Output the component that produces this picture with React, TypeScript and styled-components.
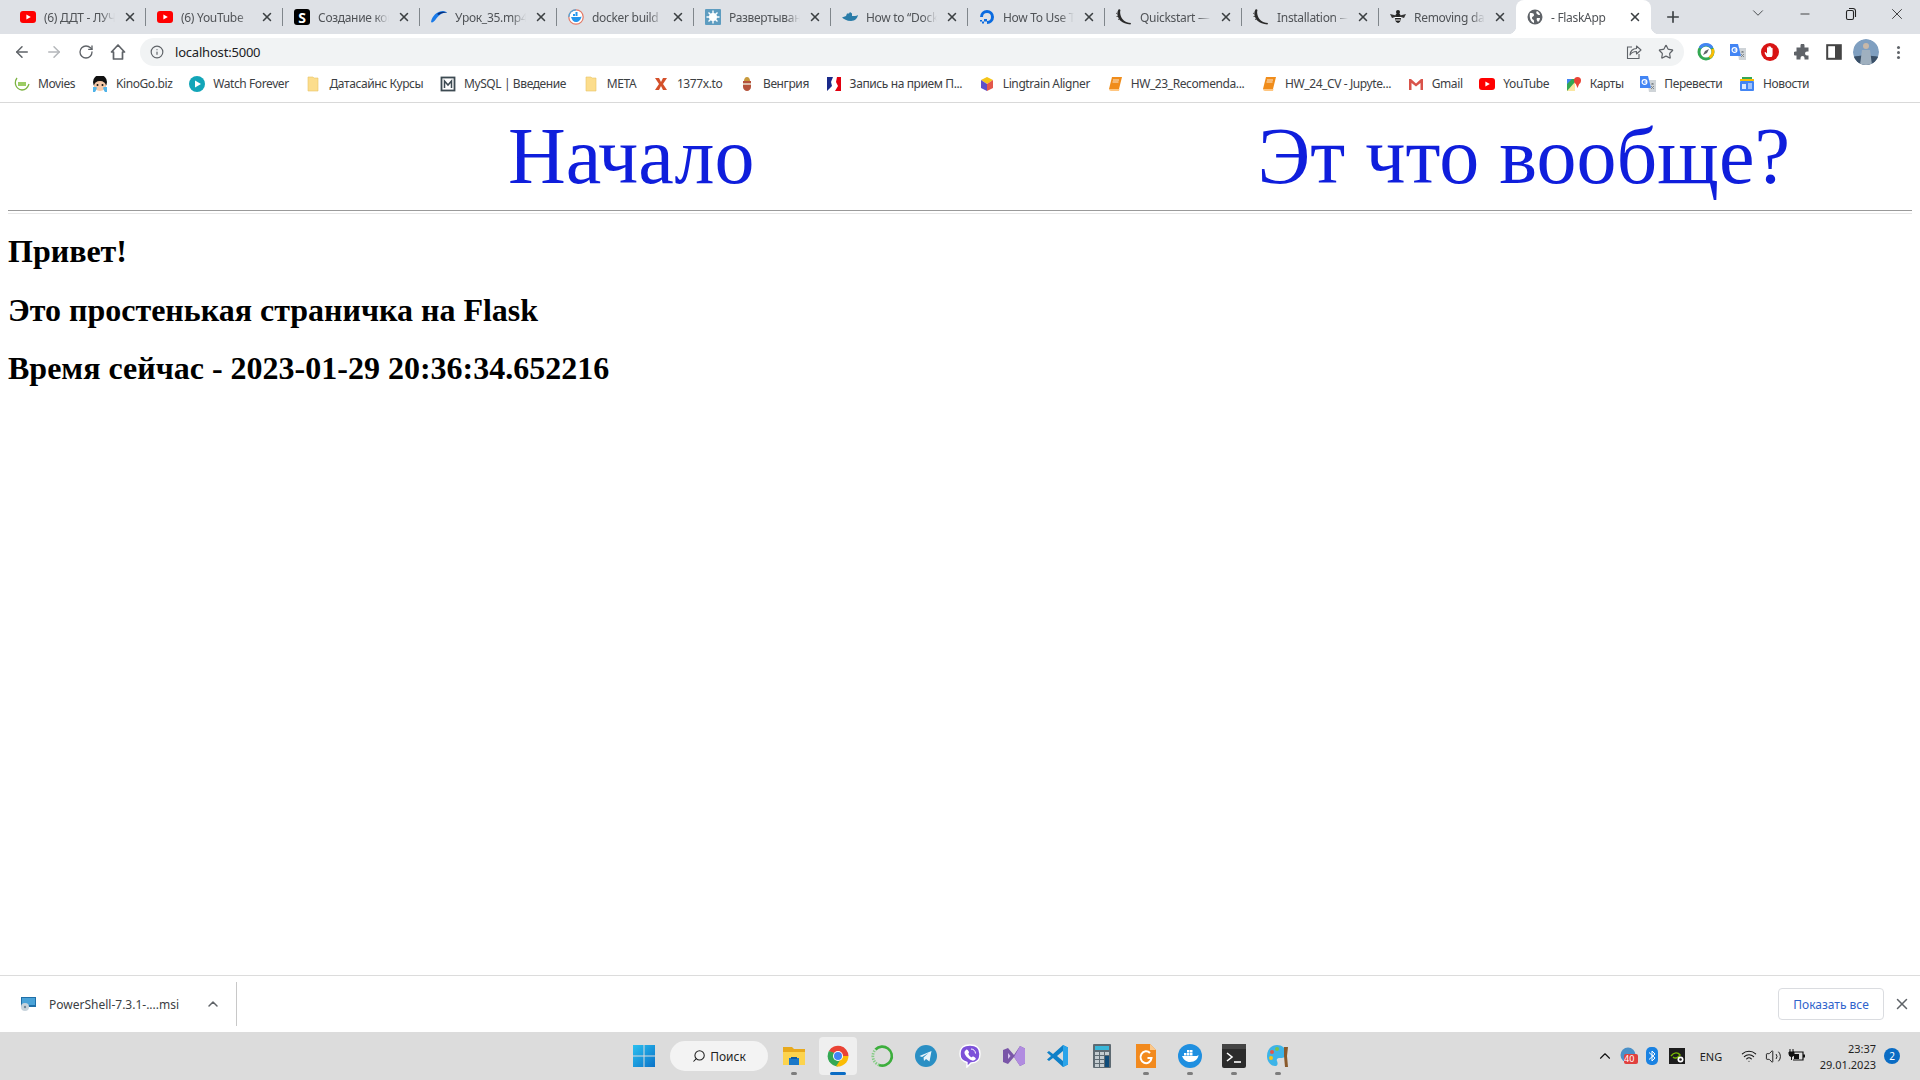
import React from "react";
import styled, { createGlobalStyle } from "styled-components";
import {
  ArrowLeft,
  ArrowRight,
  ChevronDown,
  ChevronUp,
  Info,
  Minus,
  Plus,
  RotateCw,
  Search,
  Star,
  Volume2,
  Wifi,
  X,
} from "lucide-react";

const UI_FONT = `"Noto Sans", "Open Sans", sans-serif`;

const GlobalStyle = createGlobalStyle`
  html, body {
    margin: 0;
    padding: 0;
    background: #fff;
    overflow: hidden;
  }
`;

const Favicon = ({ kind }: { kind: string }) => {
  switch (kind) {
    case "youtube":
      return (
        <svg width="16" height="16" viewBox="0 0 16 16">
          <rect y="2" width="16" height="12" rx="3" fill="#f00" />
          <path d="M6.4 5.4 10.8 8l-4.4 2.6z" fill="#fff" />
        </svg>
      );
    case "skill":
      return <SquareLetter>S</SquareLetter>;
    case "swoosh":
      return (
        <svg width="16" height="16" viewBox="0 0 16 16">
          <path d="M0 13C1 7 6 2 12 2c2 0 4 1 4 2-4-1-8 2-11 6-2 3-4 4-5 3z" fill="#1a7ae8" />
          <path d="M6 5c3-2.500 7-3 10-1-3-.5-6 0-8 2z" fill="#0b2f78" />
        </svg>
      );
    case "dockerRing":
      return (
        <svg width="16" height="16" viewBox="0 0 16 16">
          <circle cx="8" cy="8" r="7.200" fill="#fff" stroke="#e27a68" strokeWidth="1.200" />
          <path d="M.8 8A7.200 7.200 0 0 1 8 .8" fill="none" stroke="#4aa8e0" strokeWidth="1.200" />
          <path d="M3 8h9c.5 0 1-.3 1.500-.5C13 11 10.500 13 8 13s-4-2-5-5z" fill="#2496ed" />
          <path d="M5 5h2v2H5zM7.500 5h2v2h-2zM7.500 3h2v2h-2z" fill="#2496ed" />
        </svg>
      );
    case "splat":
      return (
        <svg width="16" height="16" viewBox="0 0 16 16">
          <rect width="16" height="16" rx="1" fill="#5d9cc0" />
          <circle cx="8" cy="8" r="4" fill="#fff" />
          <path d="M8 1.500v13M1.500 8h13M3.500 3.500l9 9M12.500 3.500l-9 9" stroke="#fff" strokeWidth="1.400" />
        </svg>
      );
    case "whale":
      return (
        <svg width="16" height="16" viewBox="0 0 16 16">
          <path d="M0 8.500 4 7l1-2.500h2L8 3l2 1.500V7h3c1 0 2-.5 3-1-.5 3-3 6-7 6-4.500 0-7-2-9-3.500z" fill="#2a7ca8" />
        </svg>
      );
    case "ocean":
      return (
        <svg width="16" height="16" viewBox="0 0 16 16">
          <path d="M8 15v-3a4 4 0 1 0-4-4H1a7 7 0 1 1 7 7z" fill="#0a6be0" />
          <path d="M5 12.500h3v-2.500H5zM3 14.500h2v-2H3zM1 12.500h2v-1.500H1z" fill="#0a6be0" />
        </svg>
      );
    case "horn":
      return (
        <svg width="16" height="16" viewBox="0 0 16 16">
          <path d="M3 0c-1 1-2 3-1.500 6 .5 4 4 9 13 9.500l.5-1.500C9 14 5.500 10 4.500 6 4 4 4 2 4.500 1z" fill="#2a2a2a" />
          <path d="M1.500 5 0 4M2 7.500.5 7.500M3.500 10l-1.500.5" stroke="#555" />
        </svg>
      );
    case "bee":
      return (
        <svg width="16" height="16" viewBox="0 0 16 16">
          <ellipse cx="8" cy="9" rx="3" ry="5" fill="#222" />
          <circle cx="8" cy="3" r="2" fill="#222" />
          <path d="M8 7 0 5l2 4zM8 7l8-2-2 4z" fill="#333" />
          <path d="M5 8.500h6M5.500 11h5" stroke="#fff" />
        </svg>
      );
    case "globe":
      return (
        <svg width="16" height="16" viewBox="0 0 16 16">
          <circle cx="8" cy="8" r="7.500" fill="#5f6368" />
          <path d="M3 4c2 0 4 0 4 2s-2 1-2 3 2 1 2 3v2C4 13 2 9 3 4zM10 2c2 1 3 3 3 4-1 0-2 0-3-1s-1-2 0-3zM10 9h3c0 2-1 3-2 4-1-1-2-3-1-4z" fill="#fff" />
        </svg>
      );
    case "yts":
      return (
        <svg width="16" height="16" viewBox="0 0 16 16">
          <path d="M3 2C0 6 1 13 8 14c4 0 6-3 7-6" fill="none" stroke="#7cb342" strokeWidth="1.300" />
          <path d="M4 6h8v4H4z" fill="#9ccc65" />
        </svg>
      );
    case "kino":
      return (
        <svg width="16" height="16" viewBox="0 0 16 16">
          <circle cx="8" cy="6" r="7" fill="#111" />
          <ellipse cx="8" cy="10" rx="6" ry="5" fill="#f6c9a8" />
          <path d="M1 11c2 0 3 0 4 .5-.5 2-1 3-2 4.500H1zM15 11c-2 0-3 0-4 .5.5 2 1 3 2 4.500h2z" fill="#4fb3e8" />
          <circle cx="5.500" cy="9" r="1" fill="#111" />
          <circle cx="10.500" cy="9" r="1" fill="#111" />
        </svg>
      );
    case "play":
      return (
        <svg width="16" height="16" viewBox="0 0 16 16">
          <circle cx="8" cy="8" r="8" fill="#12a5b8" />
          <path d="M6 4.500 12 8l-6 3.500z" fill="#fff" />
        </svg>
      );
    case "folder":
      return (
        <svg width="16" height="16" viewBox="0 0 16 16">
          <path d="M3 1h5l1 1h4v13H3z" fill="#fcdd8c" stroke="#e8c465" strokeWidth=".6" />
        </svg>
      );
    case "mysql":
      return (
        <svg width="16" height="16" viewBox="0 0 16 16">
          <rect x="1.500" y="1.500" width="13" height="13" fill="none" stroke="#3d4a52" strokeWidth="1.800" />
          <path d="M4.500 12V5l3.500 4 3.500-4v7" fill="none" stroke="#3d4a52" strokeWidth="1.500" />
        </svg>
      );
    case "x1337":
      return (
        <svg width="16" height="16" viewBox="0 0 16 16">
          <path d="M2 2h4l2 4 2-4h4l-4 6 4 6h-4l-2-4-2 4H2l4-6z" fill="#d4502a" />
        </svg>
      );
    case "hungary":
      return (
        <svg width="16" height="16" viewBox="0 0 16 16">
          <path d="M4 5h8v6c0 2-2 4-4 4s-4-2-4-4z" fill="#b5533c" />
          <path d="M4 8h8" stroke="#e8e2d0" strokeWidth="1.500" />
          <path d="M5 5c0-2 1-4 3-4s3 2 3 4z" fill="#c89a3c" />
        </svg>
      );
    case "france":
      return (
        <svg width="16" height="16" viewBox="0 0 16 16">
          <rect x="1" y="1" width="14" height="14" fill="#fff" />
          <path d="M1 1h6L5 6l1 4-5 5z" fill="#1a2a8a" />
          <path d="M11 1h4v14H9l3-5-2-4z" fill="#e1000f" />
        </svg>
      );
    case "lingtrain":
      return (
        <svg width="16" height="16" viewBox="0 0 16 16">
          <path d="M8 1 14 4 8 8 2 4z" fill="#f5c518" />
          <path d="M2 4v8l6 3V8z" fill="#5b4fc9" />
          <path d="M14 4v8l-6 3V8z" fill="#e2574c" />
        </svg>
      );
    case "book":
      return (
        <svg width="16" height="16" viewBox="0 0 16 16">
          <path d="M5 1h10l-3 12H2z" fill="#f08c1a" />
          <path d="M2 13c0 1 1 2 2 2h8l.5-2z" fill="#ffc680" />
          <path d="M6 4h6M5.500 6h6" stroke="#fff" strokeWidth=".8" />
        </svg>
      );
    case "gmail":
      return (
        <svg width="16" height="16" viewBox="0 0 16 16">
          <path d="M1 14V3h2l5 4.500L13 3h2v11h-2.500V7L8 10.500 3.500 7v7z" fill="#d9534a" />
        </svg>
      );
    case "maps":
      return (
        <svg width="16" height="16" viewBox="0 0 16 16">
          <path d="M1 3h8v12H1z" fill="#34a853" />
          <path d="M1 15 9 6v9z" fill="#fbe7a1" />
          <circle cx="11.500" cy="4.500" r="3.500" fill="#ea4335" />
          <path d="m9 6 2.500 6L14 6z" fill="#ea4335" />
          <path d="M1 3h5L1 8z" fill="#4285f4" />
        </svg>
      );
    case "translate":
      return (
        <svg width="16" height="16" viewBox="0 0 16 16">
          <path d="M7 4h9v12H9z" fill="#cfd4d8" />
          <path d="M11 8h3M12.500 7v1.500M11 13l3-3M11 10l3 3" stroke="#7b8186" strokeWidth=".9" />
          <path d="M0 0h8l3 12H0z" fill="#4285f4" />
          <circle cx="4.500" cy="6" r="2.400" fill="none" stroke="#fff" strokeWidth="1.200" />
          <path d="M4.500 6H7" stroke="#fff" strokeWidth="1.200" />
        </svg>
      );
    case "news":
      return (
        <svg width="16" height="16" viewBox="0 0 16 16">
          <path d="M3 1h10v4H3z" fill="#34a853" />
          <path d="M1 3h14v2H1z" fill="#fbbc04" />
          <rect x="1" y="5" width="14" height="10" rx="1" fill="#4285f4" />
          <path d="M3 8h4v5H3z" fill="#fff" opacity=".8" />
          <path d="M9 8h4M9 10h4M9 12h4" stroke="#fff" />
        </svg>
      );
    default:
      return null;
  }
};

const TaskIcon = ({ kind }: { kind: string }) => {
  switch (kind) {
    case "start":
      return (
        <svg width="24" height="24" viewBox="0 0 24 24">
          <defs>
            <linearGradient id="winBlue" x1="0" y1="0" x2="1" y2="1">
              <stop offset="0" stopColor="#2bc0f0" />
              <stop offset="1" stopColor="#0a72c8" />
            </linearGradient>
          </defs>
          <path d="M1 1h10.500v10.500H1zM12.500 1H23v10.500H12.500zM1 12.500h10.500V23H1zM12.500 12.500H23V23H12.500z" fill="url(#winBlue)" />
        </svg>
      );
    case "explorer":
      return (
        <svg width="24" height="24" viewBox="0 0 24 24">
          <path d="M1 3h9l2 2h11v4H1z" fill="#e8a91c" />
          <path d="M1 8h22v13H1z" fill="#fcd34d" />
          <path d="M7 14h10v7H7z" fill="#1a78c8" />
          <path d="M9 13h6v2H9z" fill="#0e5aa0" />
        </svg>
      );
    case "chrome":
      return (
        <svg width="24" height="24" viewBox="0 0 24 24">
          <path d="M12 12 2.900 7A10.500 10.500 0 0 1 22.500 12z" fill="#ea4335" />
          <path d="M2.900 7A10.500 10.500 0 0 0 12 22.500L17 12z" fill="#34a853" />
          <path d="M22.500 12A10.500 10.500 0 0 1 10 22.300L17 12z" fill="#fbbc04" />
          <circle cx="12" cy="12" r="5" fill="#fff" />
          <circle cx="12" cy="12" r="4" fill="#4285f4" />
        </svg>
      );
    case "ring":
      return (
        <svg width="24" height="24" viewBox="0 0 24 24">
          <path d="M5.500 5.500A9.500 9.500 0 1 1 9 21" fill="none" stroke="#3cae3c" strokeWidth="2.600" />
          <path d="M9 21A9.500 9.500 0 0 1 5.500 5.500" fill="none" stroke="#86cc86" strokeWidth="2.800" strokeDasharray="1.400 1.200" />
        </svg>
      );
    case "telegram":
      return (
        <svg width="24" height="24" viewBox="0 0 24 24">
          <circle cx="12" cy="12" r="11" fill="#2a8fc4" />
          <path d="M5.500 12 17.500 7l-2 10.500-3.500-2.500-2 2-.5-3.500 5-4.500-6.500 4z" fill="#e8f4fb" />
        </svg>
      );
    case "viber":
      return (
        <svg width="24" height="24" viewBox="0 0 24 24">
          <path d="M12 1c6 0 10 2 10 9s-4 9-9 9l-4 4v-4.500C4 17 2 15 2 10c0-7 4-9 10-9z" fill="#7d51d9" stroke="#fff" strokeWidth="1.400" />
          <path d="M8 6c1-1 2 0 3 2 .4 1-1 1-.6 2s2 3 3 3.200 1-1 2-.6c2 1 3 2 2 3-2 2-5 1-8-2s-4-6-1.400-7.600z" fill="#fff" />
          <path d="M13 5c2.500 0 4.500 2 4.500 4.500" fill="none" stroke="#fff" />
        </svg>
      );
    case "studio":
      return (
        <svg width="24" height="24" viewBox="0 0 24 24">
          <path d="M1 6 6 4l6 7 6-9 5 2.500v15L18 22l-6-9-6 7-5-2z" fill="#7a56a8" />
          <path d="M18 2l5 2.500v15L18 22 12 13z" fill="#b18ce0" />
          <path d="M6 9v6l2.500-3z" fill="#d8c4f0" />
        </svg>
      );
    case "vscode":
      return (
        <svg width="24" height="24" viewBox="0 0 24 24">
          <path d="M17 1 22 3.500v17L17 23 7 14l-4 3-2-1.500L5 12 1 8.500 3 7l4 3z" fill="#0f80c8" />
          <path d="M17 7v10l-6-5z" fill="#dcdcdc" />
          <path d="M17 1 22 3.500v17L17 23z" fill="#2aa4ea" />
        </svg>
      );
    case "calc":
      return (
        <svg width="24" height="24" viewBox="0 0 24 24">
          <rect x="3" y="0" width="18" height="24" rx="1" fill="#5e6a72" />
          <rect x="5" y="2" width="14" height="4" fill="#39b6d8" />
          <path d="M5 8h4v3H5zM10 8h4v3h-4zM15 8h4v3h-4zM5 12h4v3H5zM10 12h4v3h-4zM5 16h4v3H5zM10 16h4v3h-4zM5 20h4v3H5zM10 20h4v3h-4z" fill="#c4ccd0" />
          <path d="M15 12h4v11h-4z" fill="#0f4c7a" />
        </svg>
      );
    case "foxit":
      return (
        <svg width="24" height="24" viewBox="0 0 24 24">
          <path d="M2 0h14l6 6v18H2z" fill="#f28a1e" />
          <path d="M16 0l6 6h-6z" fill="#fcc88a" />
          <path d="M16 9a5.500 6 0 1 0 1.500 5h-4" fill="none" stroke="#fff" strokeWidth="2" />
        </svg>
      );
    case "docker":
      return (
        <svg width="24" height="24" viewBox="0 0 24 24">
          <circle cx="12" cy="12" r="12" fill="#1f8fe0" />
          <path d="M4 12h14c1 0 2-.6 2.500-1-.4 4-3.500 7-8.500 7-4 0-6.500-2.500-8-6z" fill="#fff" />
          <path d="M6 9h2.500v2.500H6zM9 9h2.500v2.500H9zM12 9h2.500v2.500H12zM9 6h2.500v2.500H9zM12 6h2.500v2.500H12z" fill="#fff" />
        </svg>
      );
    case "terminal":
      return (
        <svg width="24" height="24" viewBox="0 0 24 24">
          <rect width="24" height="24" rx="2" fill="#2b2b2b" />
          <rect width="24" height="5" fill="#444" />
          <path d="m5 9 5 4-5 4" fill="none" stroke="#fff" strokeWidth="1.600" />
          <path d="M12 18h7" stroke="#fff" strokeWidth="1.600" />
        </svg>
      );
    case "paint":
      return (
        <svg width="24" height="24" viewBox="0 0 24 24">
          <path d="M11 1C5 1 1 6 1 12s4 10 8 10c3 0 3-3 2-5s1-3 3-3 6 0 6-5-4-8-9-8z" fill="#3db4e8" />
          <circle cx="6" cy="8" r="2" fill="#e2574c" />
          <circle cx="11" cy="5" r="2" fill="#7cc04b" />
          <circle cx="5" cy="14" r="2" fill="#f5c518" />
          <path d="M18 3h4l-1 9 1 11h-3l-1-11z" fill="#8a5a2b" />
        </svg>
      );
    default:
      return null;
  }
};

const TABS = [
  { title: "(6) ДДТ - ЛУЧШЕЕ", icon: "youtube" },
  { title: "(6) YouTube", icon: "youtube" },
  { title: "Создание контейнера", icon: "skill" },
  { title: "Урок_35.mp4 - Google", icon: "swoosh" },
  { title: "docker build | Docker", icon: "dockerRing" },
  { title: "Развертывание", icon: "splat" },
  { title: "How to “Dockerize”", icon: "whale" },
  { title: "How To Use Traefik", icon: "ocean" },
  { title: "Quickstart — Flask", icon: "horn" },
  { title: "Installation — Flask", icon: "horn" },
  { title: "Removing data", icon: "bee" },
];

const BOOKMARKS = [
  { title: "Movies", icon: "yts" },
  { title: "KinoGo.biz", icon: "kino" },
  { title: "Watch Forever", icon: "play" },
  { title: "Датасайнс Курсы", icon: "folder" },
  { title: "MySQL | Введение", icon: "mysql" },
  { title: "META", icon: "folder" },
  { title: "1377x.to", icon: "x1337" },
  { title: "Венгрия", icon: "hungary" },
  { title: "Запись на прием П...", icon: "france" },
  { title: "Lingtrain Aligner", icon: "lingtrain" },
  { title: "HW_23_Recomenda...", icon: "book" },
  { title: "HW_24_CV - Jupyte...", icon: "book" },
  { title: "Gmail", icon: "gmail" },
  { title: "YouTube", icon: "youtube" },
  { title: "Карты", icon: "maps" },
  { title: "Перевести", icon: "translate" },
  { title: "Новости", icon: "news" },
];

const TASK_APPS = [
  { icon: "explorer", running: true },
  { icon: "chrome", active: true },
  { icon: "ring" },
  { icon: "telegram" },
  { icon: "viber" },
  { icon: "studio" },
  { icon: "vscode" },
  { icon: "calc" },
  { icon: "foxit", running: true },
  { icon: "docker", running: true },
  { icon: "terminal", running: true },
  { icon: "paint", running: true },
];

const App = () => {
  return (
    <Screen>
      <GlobalStyle />
      <TabStrip>
        {TABS.map((tab) => (
          <Tab key={tab.title}>
            <Favicon kind={tab.icon} />
            <TabTitle>{tab.title}</TabTitle>
            <TabClose>
              <X size={14} strokeWidth={2.6} />
            </TabClose>
          </Tab>
        ))}
        <ActiveTab>
          <Favicon kind="globe" />
          <TabTitle>- FlaskApp</TabTitle>
          <TabClose>
            <X size={14} strokeWidth={2.6} />
          </TabClose>
        </ActiveTab>
        <NewTab>
          <Plus size={18} strokeWidth={2.2} />
        </NewTab>
        <TabSearch>
          <ChevronDown size={18} strokeWidth={1.2} />
        </TabSearch>
        <WindowButton>
          <Minus size={14} strokeWidth={1.4} />
        </WindowButton>
        <WindowButton>
          <svg width="12" height="14" viewBox="0 0 12 14" fill="none" stroke="#222" strokeWidth="1.100">
            <rect x="1.500" y="3.500" width="7" height="9" rx="1.500" />
            <path d="M4 1.500h4a2.500 2.500 0 0 1 2.500 2.500v6" />
          </svg>
        </WindowButton>
        <WindowButton>
          <X size={18} strokeWidth={1.1} />
        </WindowButton>
      </TabStrip>

      <Toolbar>
        <ToolButton>
          <ArrowLeft size={18} strokeWidth={2} />
        </ToolButton>
        <ToolButton $muted>
          <ArrowRight size={18} strokeWidth={2} />
        </ToolButton>
        <ToolButton>
          <RotateCw size={16} strokeWidth={2} />
        </ToolButton>
        <ToolButton>
          <svg width="18" height="18" viewBox="0 0 18 18" fill="none" stroke="#5f6368" strokeWidth="1.700">
            <path d="M9 2 2.500 9H4.500v7h9V9h2z" strokeLinejoin="round" />
          </svg>
        </ToolButton>
        <AddressBar>
          <Info size={14} strokeWidth={2} color="#5f6368" />
          <AddressText>localhost:5000</AddressText>
          <AddressActions>
            <svg width="16" height="16" viewBox="0 0 16 16" fill="none" stroke="#5f6368" strokeWidth="1.100">
              <path d="M6 3H1.500v11.500H13V10" />
              <path d="M4 11c0-4 3-6.500 6.500-6.500V2L15 6l-4.500 4V7.500C8 7.500 5.500 8.500 4 11z" strokeLinejoin="round" />
            </svg>
            <Star size={16} strokeWidth={1.8} color="#5f6368" />
          </AddressActions>
        </AddressBar>
        <Extensions>
          <ToolButton>
            <svg width="18" height="18" viewBox="0 0 18 18">
              <circle cx="9" cy="9" r="7" fill="#fff" stroke="#34a853" strokeWidth="3" />
              <path d="M3 5a7 7 0 0 1 12 0" fill="none" stroke="#4285f4" strokeWidth="3" />
              <path d="M15.500 6a7 7 0 0 1-3 8.500" fill="none" stroke="#fbbc04" strokeWidth="3" />
              <path d="m12 6-2 4-4 2 2-4z" fill="#5f6368" />
            </svg>
          </ToolButton>
          <ToolButton>
            <Favicon kind="translate" />
          </ToolButton>
          <ToolButton>
            <svg width="18" height="18" viewBox="0 0 18 18">
              <circle cx="9" cy="9" r="9" fill="#d81414" />
              <path d="M6 14c-1-1-2-3-2.500-4.500L4.500 9 6 10.500V5a.7.7 0 0 1 1.400 0v3V3.800a.7.7 0 0 1 1.400 0V8 4.300a.7.7 0 0 1 1.400 0V8.500 5.500a.7.7 0 0 1 1.400 0V11c0 1.500-.5 2.500-1 3z" fill="#fff" />
            </svg>
          </ToolButton>
          <ToolButton>
            <svg width="16" height="16" viewBox="0 0 16 16">
              <path d="M6 1a2 2 0 0 1 4 0v2h4v4h-1.500a2 2 0 0 0 0 4H14v4H10v-1.500a2 2 0 0 0-4 0V15H2v-4H1a2 2 0 0 1 0-4h1V3h4z" fill="#5f6368" transform="translate(.5 .5)" />
            </svg>
          </ToolButton>
          <ToolButton>
            <svg width="16" height="16" viewBox="0 0 16 16">
              <rect x="1.200" y="1.200" width="13.600" height="13.600" fill="none" stroke="#444" strokeWidth="2" />
              <rect x="9" y="2" width="5" height="12" fill="#444" />
            </svg>
          </ToolButton>
          <ToolButton>
            <Avatar>
              <svg width="26" height="26" viewBox="0 0 26 26">
                <circle cx="13" cy="13" r="13" fill="#7f9fc0" />
                <path d="M0 18c6-2 18-2 26 0v8H0z" fill="#3a5068" />
                <circle cx="13" cy="7" r="3" fill="#c8b8a8" />
                <path d="M9 11h8l2 15H7z" fill="#9fb0bf" />
              </svg>
            </Avatar>
          </ToolButton>
          <ToolButton>
            <MenuDots />
          </ToolButton>
        </Extensions>
      </Toolbar>

      <BookmarkBar>
        {BOOKMARKS.map((bookmark) => (
          <Bookmark key={bookmark.title}>
            <Favicon kind={bookmark.icon} />
            <span>{bookmark.title}</span>
          </Bookmark>
        ))}
      </BookmarkBar>

      <Page>
        <PageNav>
          <NavLink>Начало</NavLink>
          <NavLink>Эт что вообще?</NavLink>
        </PageNav>
        <Rule />
        <Heading>Привет!</Heading>
        <Heading>Это простенькая страничка на Flask</Heading>
        <Heading>Время сейчас - 2023-01-29 20:36:34.652216</Heading>
      </Page>

      <DownloadBar>
        <DownloadItem>
          <svg width="16" height="16" viewBox="0 0 16 16">
            <rect x="1" y="1" width="15" height="10" fill="#1f6fa8" />
            <rect x="2" y="2" width="13" height="7" fill="#4aa3d8" />
            <circle cx="5" cy="11" r="4" fill="#c8d4dc" />
            <circle cx="5" cy="11" r="1.200" fill="#6f8796" />
          </svg>
          <DownloadName>PowerShell-7.3.1-....msi</DownloadName>
          <ChevronUp size={16} strokeWidth={2.2} color="#5f6368" />
        </DownloadItem>
        <ShowAllButton>Показать все</ShowAllButton>
        <DownloadClose>
          <X size={18} strokeWidth={2} />
        </DownloadClose>
      </DownloadBar>

      <Taskbar>
        <TaskSlot>
          <TaskIcon kind="start" />
        </TaskSlot>
        <SearchPill>
          <Search size={14} strokeWidth={1.8} style={{ transform: "scaleX(-1)" }} />
          Поиск
        </SearchPill>
        {TASK_APPS.map((app) => (
          <TaskSlot key={app.icon} $active={app.active}>
            <TaskIcon kind={app.icon} />
            {app.running && <RunDot />}
            {app.active && <ActiveBar />}
          </TaskSlot>
        ))}
        <Tray>
          <TrayItem>
            <ChevronUp size={18} strokeWidth={1.5} />
          </TrayItem>
          <TrayItem>
            <svg width="18" height="18" viewBox="0 0 18 18">
              <circle cx="8" cy="8" r="7.500" fill="#4a90c8" />
              <rect x="4" y="7" width="14" height="10" rx="2" fill="#e0403e" />
            </svg>
            <TrayBadge>40</TrayBadge>
          </TrayItem>
          <TrayItem>
            <svg width="14" height="18" viewBox="0 0 14 18">
              <rect width="12" height="18" rx="5" fill="#1a82e2" />
              <path d="M3 5.500 9 11l-3 3V4l3 3-6 5.500" fill="none" stroke="#fff" strokeWidth="1" />
            </svg>
          </TrayItem>
          <TrayItem>
            <svg width="16" height="16" viewBox="0 0 16 16">
              <rect width="16" height="16" fill="#1c1c1c" />
              <path d="M2 8c3-4 7-4 9-1-2 3-5 4-7 2" fill="none" stroke="#76b900" strokeWidth="1.400" />
              <circle cx="11.500" cy="11.500" r="3" fill="#fff" />
              <circle cx="11.500" cy="11.500" r="1.300" fill="#222" />
            </svg>
          </TrayItem>
          <TrayLang>ENG</TrayLang>
          <TrayItem>
            <Wifi size={16} strokeWidth={1.6} />
          </TrayItem>
          <TrayItem>
            <Volume2 size={17} strokeWidth={1.3} />
          </TrayItem>
          <TrayItem>
            <svg width="18" height="14" viewBox="0 0 18 14">
              <path d="M5 3h10v8H5" fill="none" stroke="#111" strokeWidth="1.200" />
              <path d="M6 5h5v5H6zM15 5.500h2v3h-2z" fill="#111" />
              <path d="M1 3h5v2a2.500 2.500 0 0 1-5 0zM2 0v3M5 0v3M3.500 7v4" stroke="#111" fill="#111" strokeWidth="1" />
            </svg>
          </TrayItem>
          <Clock>
            <span>23:37</span>
            <span>29.01.2023</span>
          </Clock>
          <NotifyBadge>2</NotifyBadge>
        </Tray>
      </Taskbar>
    </Screen>
  );
};

const Screen = styled.div`
  width: 1920px;
  height: 1080px;
  display: flex;
  flex-direction: column;
  overflow: hidden;
  background: #fff;
  font-family: ${UI_FONT};
`;

const TabStrip = styled.div`
  height: 34px;
  flex: none;
  display: flex;
  align-items: stretch;
  padding-left: 9px;
  background: #dee1e6;
`;

const Tab = styled.div`
  box-sizing: border-box;
  width: 137px;
  flex: none;
  display: flex;
  align-items: center;
  gap: 8px;
  padding: 0 9px 0 11px;
  position: relative;
  color: #505357;
  &::after {
    content: "";
    position: absolute;
    right: 0;
    top: 8px;
    bottom: 8px;
    width: 1px;
    background: #80868b;
  }
  &:nth-child(11)::after {
    display: none;
  }
`;

const ActiveTab = styled(Tab)`
  width: 135px;
  background: #fff;
  border-radius: 8px 8px 0 0;
  &::before,
  &::after {
    content: "";
    position: absolute;
    top: auto;
    bottom: 0;
    width: 8px;
    height: 8px;
    background: #fff;
  }
  &::before {
    left: -8px;
    right: auto;
    -webkit-mask-image: radial-gradient(circle at 0 0, transparent 8px, #000 8.5px);
    mask-image: radial-gradient(circle at 0 0, transparent 8px, #000 8.5px);
  }
  &::after {
    right: -8px;
    -webkit-mask-image: radial-gradient(circle at 100% 0, transparent 8px, #000 8.5px);
    mask-image: radial-gradient(circle at 100% 0, transparent 8px, #000 8.5px);
  }
`;

const TabTitle = styled.span`
  flex: 1;
  min-width: 0;
  overflow: hidden;
  white-space: nowrap;
  font-size: 12px;
  letter-spacing: -0.3px;
  -webkit-mask-image: linear-gradient(to right, #000 80%, transparent 100%);
  mask-image: linear-gradient(to right, #000 80%, transparent 100%);
`;

const TabClose = styled.span`
  display: flex;
  color: #3c4043;
`;

const SquareLetter = styled.span`
  width: 16px;
  height: 16px;
  flex: none;
  display: flex;
  align-items: center;
  justify-content: center;
  border-radius: 3px;
  background: #000;
  color: #fff;
  font-size: 14px;
  font-weight: 700;
`;

const NewTab = styled.div`
  width: 24px;
  margin-left: 10px;
  display: flex;
  align-items: center;
  justify-content: center;
  color: #3c4043;
`;

const TabSearch = styled.div`
  width: 24px;
  margin-left: auto;
  margin-right: 12px;
  padding-bottom: 8px;
  display: flex;
  align-items: center;
  justify-content: center;
  color: #3c4043;
`;

const WindowButton = styled.div`
  width: 46px;
  padding-bottom: 6px;
  display: flex;
  align-items: center;
  justify-content: center;
  color: #222;
`;

const Toolbar = styled.div`
  height: 36px;
  flex: none;
  box-sizing: border-box;
  display: flex;
  align-items: center;
  padding-left: 6px;
  background: #fff;
`;

const ToolButton = styled.div<{ $muted?: boolean }>`
  width: 32px;
  height: 32px;
  flex: none;
  display: flex;
  align-items: center;
  justify-content: center;
  color: ${(p) => (p.$muted ? "#b4b7ba" : "#5f6368")};
`;

const AddressBar = styled.div`
  width: 1544px;
  height: 28px;
  margin: 0 6px;
  flex: none;
  box-sizing: border-box;
  display: flex;
  align-items: center;
  gap: 11px;
  padding: 0 10px;
  border-radius: 14px;
  background: #f1f3f4;
`;

const AddressText = styled.span`
  font-size: 13px;
  letter-spacing: -0.2px;
  color: #202124;
`;

const AddressActions = styled.div`
  margin-left: auto;
  display: flex;
  align-items: center;
  gap: 16px;
`;

const Extensions = styled.div`
  display: flex;
  align-items: center;
`;

const Avatar = styled.div`
  width: 26px;
  height: 26px;
  display: flex;
  border-radius: 50%;
  overflow: hidden;
`;

const MenuDots = styled.span`
  width: 3px;
  height: 3px;
  border-radius: 50%;
  background: #5f6368;
  box-shadow: 0 -5px 0 #5f6368, 0 5px 0 #5f6368;
`;

const BookmarkBar = styled.div`
  height: 33px;
  flex: none;
  box-sizing: border-box;
  display: flex;
  align-items: center;
  gap: 16.7px;
  padding: 0 0 5px 14px;
  border-bottom: 1px solid #d9d9d9;
  background: #fff;
`;

const Bookmark = styled.div`
  display: flex;
  align-items: center;
  gap: 8px;
  font-size: 12px;
  letter-spacing: -0.4px;
  color: #3c4043;
  white-space: nowrap;
`;

const Page = styled.main`
  flex: 1;
  min-height: 0;
  padding: 0 8px;
  font-family: "Liberation Serif", serif;
  color: #000;
`;

const PageNav = styled.nav`
  display: flex;
  gap: 503px;
  height: 107px;
  box-sizing: border-box;
  padding: 7px 0 0 500px;
`;

const NavLink = styled.a`
  font-size: 80px;
  line-height: 92px;
  color: #0f1edc;
  white-space: nowrap;
`;

const Rule = styled.hr`
  margin: 0 0 -2px;
  height: 2px;
  border: none;
  border-top: 1px solid #9a9a9a;
  border-bottom: 1px solid #e8e8e8;
`;

const Heading = styled.h1`
  margin: 21.44px 0;
  font-size: 32px;
  line-height: 37px;
  font-weight: 700;
`;

const DownloadBar = styled.div`
  height: 57px;
  flex: none;
  box-sizing: border-box;
  display: flex;
  align-items: center;
  padding: 0 9px 0 20px;
  border-top: 1px solid #dcdcdc;
  background: #fff;
`;

const DownloadItem = styled.div`
  width: 217px;
  height: 44px;
  box-sizing: border-box;
  display: flex;
  align-items: center;
  gap: 13px;
  padding-right: 15px;
  border-right: 1px solid #c8c8c8;
`;

const DownloadName = styled.span`
  flex: 1;
  font-size: 12px;
  color: #3c4043;
  white-space: nowrap;
`;

const ShowAllButton = styled.button`
  width: 106px;
  height: 32px;
  margin-left: auto;
  border: 1px solid #dadce0;
  border-radius: 4px;
  background: #fff;
  font-family: ${UI_FONT};
  font-size: 12px;
  color: #2f63cc;
`;

const DownloadClose = styled.div`
  margin-left: 9px;
  display: flex;
  color: #5f6368;
`;

const Taskbar = styled.div`
  height: 48px;
  flex: none;
  display: flex;
  align-items: center;
  padding-left: 622px;
  background: #dcdcdc;
`;

const TaskSlot = styled.div<{ $active?: boolean }>`
  position: relative;
  width: 44px;
  height: 38px;
  flex: none;
  display: flex;
  align-items: center;
  justify-content: center;
  ${(p) =>
    p.$active &&
    `
    width: 38px;
    margin: 0 3px;
    background: #efefef;
    border-radius: 4px;
  `}
`;

const RunDot = styled.span`
  position: absolute;
  bottom: 0;
  left: 19px;
  width: 6px;
  height: 3px;
  border-radius: 2px;
  background: #7d7d7d;
`;

const ActiveBar = styled.span`
  position: absolute;
  bottom: 0;
  left: 11px;
  width: 16px;
  height: 3px;
  border-radius: 2px;
  background: #0a6cc4;
`;

const SearchPill = styled.div`
  width: 98px;
  height: 30px;
  margin: 0 4px;
  flex: none;
  display: flex;
  align-items: center;
  justify-content: center;
  gap: 4px;
  border-radius: 15px;
  background: #f3f3f3;
  font-size: 12px;
  color: #1f1f1f;
`;

const Tray = styled.div`
  margin-left: auto;
  display: flex;
  align-items: center;
  padding-right: 20px;
`;

const TrayItem = styled.div`
  position: relative;
  width: 24px;
  height: 24px;
  display: flex;
  align-items: center;
  justify-content: center;
  color: #111;
`;

const TrayBadge = styled.span`
  position: absolute;
  left: 7px;
  top: 8px;
  font-size: 9px;
  color: #fff;
`;

const TrayLang = styled.div`
  width: 44px;
  margin-right: 4px;
  text-align: center;
  font-size: 11px;
  color: #1f1f1f;
`;

const Clock = styled.div`
  width: 67px;
  display: flex;
  flex-direction: column;
  align-items: flex-end;
  gap: 1px;
  font-size: 11px;
  line-height: 15px;
  color: #1f1f1f;
`;

const NotifyBadge = styled.div`
  width: 16px;
  height: 16px;
  margin-left: 8px;
  display: flex;
  align-items: center;
  justify-content: center;
  border-radius: 50%;
  background: #0a6cc4;
  font-size: 10px;
  color: #fff;
`;

export default App;
